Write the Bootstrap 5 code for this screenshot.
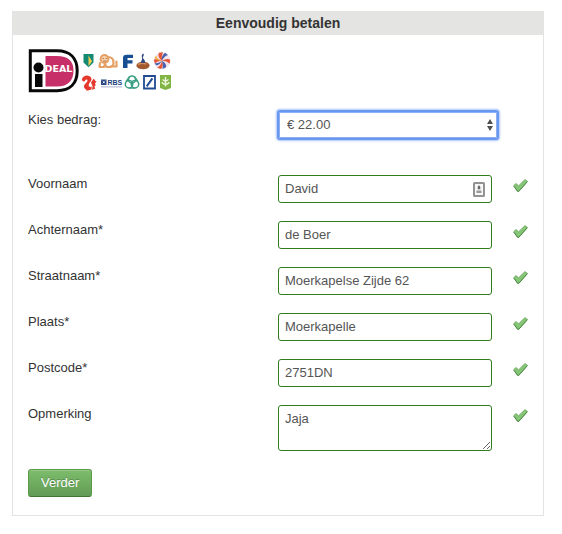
<!DOCTYPE html>
<html lang="nl">
<head>
<meta charset="utf-8">
<meta name="viewport" content="width=device-width, initial-scale=1">
<title>Eenvoudig betalen</title>
<link href="https://cdn.jsdelivr.net/npm/bootstrap@5.3.0/dist/css/bootstrap.min.css" rel="stylesheet">
<style>
  body {
    font-family: "Liberation Sans", Arial, sans-serif;
    font-size: 13px;
    line-height: 18px;
    color: #333;
    padding: 11px 18px 18px 12px;
  }
  .pay-panel { border: 1px solid #e3e3e3; }
  .pay-title {
    background: #e4e4e2;
    font-size: 14px;
    line-height: 24px;
    margin: -1px -1px 0;
  }
  .pay-body { padding: 13px 15px 18px; }
  .pay-logo { width: 146px; height: 46px; margin-bottom: 17px; }
  .field-row { margin-bottom: 18px; }
  .field-row.amount { margin-bottom: 36px; }
  .field-wrap { gap: 21px; }
  .field {
    height: 28px;
    padding: 3px 6px 5px;
    font-size: 13px;
    line-height: 18px;
    color: #555;
    background-color: #fff;
    border: 1px solid #2f7d1c;
    border-radius: 3px;
    min-width: 0;
  }
  .field:focus { outline: 0; box-shadow: 0 0 3px #2f7d1c; color: #555; }
  textarea.field { height: 46px; padding-top: 4px; resize: both; }
  .field.with-card {
    padding-right: 24px;
    background: #fff url("data:image/svg+xml,%3Csvg xmlns='http://www.w3.org/2000/svg' width='12' height='15' viewBox='0 0 12 15'%3E%3Crect x='1' y='1' width='10' height='13' rx='.5' fill='%23f7f7f7' stroke='%23939393' stroke-width='2'/%3E%3Cpath d='M6 3l1.3 2v2.200H4.700V5z' fill='%23666'/%3E%3Cpath d='M3.500 8.500h5v2.500h-5z' fill='%23999'/%3E%3C/svg%3E") no-repeat right 6px center;
  }
  .amount-select {
    appearance: none;
    height: 28px;
    margin-right: 30px;
    padding: 4px 20px 4px 8px;
    font-size: 13px;
    line-height: 18px;
    color: #555;
    border: 1px solid #6796ee;
    border-radius: 2px;
    box-shadow: 0 0 0 1px #6c9af0, 0 0 2px 2px #a9c5fa, inset 0 0 0 1px #8db0f5;
    outline: 0;
    background: #fff url("data:image/svg+xml,%3Csvg xmlns='http://www.w3.org/2000/svg' width='6' height='12' viewBox='0 0 6 12'%3E%3Cpath d='M3 0l3 5H0zM3 12l3-5H0z' fill='%23505050'/%3E%3C/svg%3E") no-repeat right 4px center;
  }
  .tick { width: 15px; height: 13px; margin-top: 4px; }
  .btn-next {
    height: 28px;
    padding: 4px 12px;
    font-size: 13px;
    line-height: 18px;
    color: #fff;
    text-shadow: 0 -1px 0 rgba(0, 0, 0, .25);
    background: linear-gradient(#7dbd6b, #629b56);
    border: 1px solid #5c9a4d;
    border-bottom-color: #417636;
    border-radius: 3px;
    box-shadow: inset 0 1px 0 rgba(255, 255, 255, .2);
  }
  .btn-next:hover { color: #fff; background: #629b56; }
</style>
</head>
<body>
<svg class="d-none" aria-hidden="true">
  <symbol id="tick" viewBox="0 0 15 13">
    <path d="M.600 6.800L3 4.500l2.600 2.300L12 .6l2.500 1.900-8.700 9.900H4.600z" fill="#86c777" stroke="#6aa55f" stroke-width=".8" stroke-linejoin="round"/>
    <path d="M.900 7.300l3.900 5h1l8.500-9.600" fill="none" stroke="#4b8643" stroke-width=".9" stroke-linejoin="round"/>
  </symbol>
</svg>

<main class="pay-panel">
  <h1 class="pay-title text-center fw-bold">Eenvoudig betalen</h1>
  <form class="pay-body">
    <svg class="pay-logo d-block" viewBox="0 0 146 46" role="img" aria-label="iDEAL en deelnemende banken">
      <!-- iDEAL -->
      <path d="M2.300 2.800H29C42 2.800 49.200 10 49.200 22.800S42 42.700 29 42.700H2.300z" fill="#fff" stroke="#080808" stroke-width="3"/>
      <path d="M17.500 8H29C40 8 45.500 13 45.500 22.800S40 38.500 29 38.500H17.500z" fill="#c62f68"/>
      <text x="16.500" y="23.500" font-family="DejaVu Sans, sans-serif" font-size="9.500" font-weight="bold" fill="#fff">DEAL</text>
      <circle cx="10.500" cy="19.500" r="5" fill="#080808"/>
      <path d="M7 26h7.500v13H7z" fill="#080808"/>
      <!-- shield -->
      <path d="M55.500 6h10v8.500l-5 4.700-5-4.700z" fill="#128a73"/>
      <path d="M60.500 7.500l3.600 5.800-3.600 5z" fill="#f0cb4e"/>
      <!-- lion -->
      <g fill="none" stroke="#e5a066" stroke-linecap="round" stroke-linejoin="round">
        <circle cx="76.500" cy="11" r="3.900" fill="#f6d3b0" stroke-width="2"/>
        <path d="M75 10.500h.5M78 10.500h.5M75.500 13h2.500" stroke="#b96f35" stroke-width="1"/>
        <path d="M80 9c4 0 5.500 2 5.500 5.500 0 2.500-1 4-3 4M72 15l-.5 4H76l1-3 1.500 3H83M85 18.500h3.500v-5" stroke-width="2.200"/>
      </g>
      <!-- F -->
      <path d="M95 20V10q0-3.300 3.500-3.300H105v3.300h-5.500v2.200h5v3.200h-5V20z" fill="#174f92"/>
      <!-- figure on a stone -->
      <ellipse cx="115" cy="17.500" rx="6.600" ry="3.800" fill="#a3592e"/>
      <path d="M110 16.500q4-2 8-.5" fill="none" stroke="#d5915c" stroke-width="1.400"/>
      <path d="M115.200 5.500c2 2-1.500 3.300.3 5.200 1 1.500 2 2.500 1.500 4.300h-4c-.5-2 1.500-3 1.100-5-.4-2-.9-3 1.100-4.500z" fill="#354a80"/>
      <!-- striped ball -->
      <circle cx="134" cy="12.800" r="8.500" fill="#f2e4ec"/>
      <g fill="#e75437">
        <path d="M134 12.800q-5-4-3-8l4-.5q-2 4-1 8.500z"/>
        <path d="M134 12.800q5-3 8.200-1l-.5 4q-3-3-7.700-3z"/>
        <path d="M134 12.800q2 5-1 8.300l-4-1.300q4-2 5-7z"/>
        <path d="M134 12.800q-5 0-7 3l-1.200-4q3-2 8.200 1z"/>
      </g>
      <g fill="#4c60ad">
        <path d="M134 12.800q-1-5 3-8l3 2.200q-4 1-6 5.800z"/>
        <path d="M134 12.800q5 3 4 6.500l-3.500 1.800q1-4-.5-8.300z"/>
        <path d="M134 12.800q-3 5-6 4.500l-1.300-2.300q4 .8 7.300-2.200z"/>
      </g>
      <path d="M134 12.800q-4-1-5.800-5l-1.700 2q2 3 7.500 3z" fill="#f3b64f"/>
      <!-- squirrel -->
      <path d="M54 31c1-4 7-4.800 9-1.500 1.800 3.300-2 4.800-2.300 7.500-.1 1.800 1.300 2.500 3 1.500l-.2 3-3.500 1h-2l.5-.8c-3.500-1.500-3-4.700-.5-6.700 1.800-1.500 2-3.500.5-3.500-1.500.1-1 2-2.500 2-1.300 0-2.300-1-2-2.500z" fill="#e4382d"/>
      <path d="M63 34.500l2-3 1-1 .5 1.500 2 1.700-1.500 1.500.7 2-1.200 1 .5 2.500-3 1 .6-3.500z" fill="#e4382d"/>
      <!-- RBS -->
      <path d="M73 31.500h5.500V37H73z" fill="#223f80"/>
      <path d="M73.500 32l4.500 4.500m0-4.500l-4.500 4.500" stroke="#8fa1c8" stroke-width=".6"/>
      <path d="M75 33.500h1.500V35H75z" fill="#fff"/>
      <text x="79.500" y="36.800" font-family="Liberation Sans, Arial, sans-serif" font-size="7" font-weight="bold" fill="#223f80">RBS</text>
      <path d="M73 38.900h21" stroke="#a5b1ce" stroke-width="1"/>
      <!-- knot -->
      <g fill="none" stroke="#3b9f84" stroke-width="1.500">
        <circle cx="104" cy="31.500" r="3.600"/>
        <circle cx="101" cy="36.200" r="3.700"/>
        <circle cx="107" cy="36.200" r="3.700"/>
        <path d="M98.200 33.500l3.500-5M109.800 33.500l-3.500-5M101 40h6"/>
      </g>
      <!-- slash in a square -->
      <path d="M116 28h11v12.500h-11z" fill="#fff" stroke="#214b92" stroke-width="1.800"/>
      <path d="M118.700 38.300l5.700-8" stroke="#214b92" stroke-width="2"/>
      <!-- tree on a green shield -->
      <path d="M132 27h11v13l-5.500 2-5.500-2z" fill="#80b543"/>
      <path d="M137.500 29v9.500M134.500 31.500l3 2 3-2M133.700 34.200q2.500 3 3.800 1.200 1.300 1.800 3.800-1.200" fill="none" stroke="#eef8df" stroke-width="1.400"/>
    </svg>

    <div class="row g-0 field-row amount">
      <label class="col-6" for="bedrag">Kies bedrag:</label>
      <div class="col-6 d-flex">
        <select class="amount-select flex-grow-1" id="bedrag"><option>€ 22.00</option></select>
      </div>
    </div>
    <div class="row g-0 field-row">
      <label class="col-6" for="voornaam">Voornaam</label>
      <div class="col-6 d-flex align-items-start field-wrap">
        <input class="field with-card flex-grow-1" id="voornaam" type="text" value="David">
        <svg class="tick flex-shrink-0" aria-hidden="true"><use href="#tick"/></svg>
      </div>
    </div>
    <div class="row g-0 field-row">
      <label class="col-6" for="achternaam">Achternaam*</label>
      <div class="col-6 d-flex align-items-start field-wrap">
        <input class="field flex-grow-1" id="achternaam" type="text" value="de Boer">
        <svg class="tick flex-shrink-0" aria-hidden="true"><use href="#tick"/></svg>
      </div>
    </div>
    <div class="row g-0 field-row">
      <label class="col-6" for="straatnaam">Straatnaam*</label>
      <div class="col-6 d-flex align-items-start field-wrap">
        <input class="field flex-grow-1" id="straatnaam" type="text" value="Moerkapelse Zijde 62">
        <svg class="tick flex-shrink-0" aria-hidden="true"><use href="#tick"/></svg>
      </div>
    </div>
    <div class="row g-0 field-row">
      <label class="col-6" for="plaats">Plaats*</label>
      <div class="col-6 d-flex align-items-start field-wrap">
        <input class="field flex-grow-1" id="plaats" type="text" value="Moerkapelle">
        <svg class="tick flex-shrink-0" aria-hidden="true"><use href="#tick"/></svg>
      </div>
    </div>
    <div class="row g-0 field-row">
      <label class="col-6" for="postcode">Postcode*</label>
      <div class="col-6 d-flex align-items-start field-wrap">
        <input class="field flex-grow-1" id="postcode" type="text" value="2751DN">
        <svg class="tick flex-shrink-0" aria-hidden="true"><use href="#tick"/></svg>
      </div>
    </div>
    <div class="row g-0 field-row">
      <label class="col-6" for="opmerking">Opmerking</label>
      <div class="col-6 d-flex align-items-start field-wrap">
        <textarea class="field flex-grow-1" id="opmerking" rows="2">Jaja</textarea>
        <svg class="tick flex-shrink-0" aria-hidden="true"><use href="#tick"/></svg>
      </div>
    </div>
    <button class="btn btn-next d-block" type="button">Verder</button>
  </form>
</main>
<script src="https://cdn.jsdelivr.net/npm/bootstrap@5.3.0/dist/js/bootstrap.bundle.min.js"></script>
</body>
</html>
